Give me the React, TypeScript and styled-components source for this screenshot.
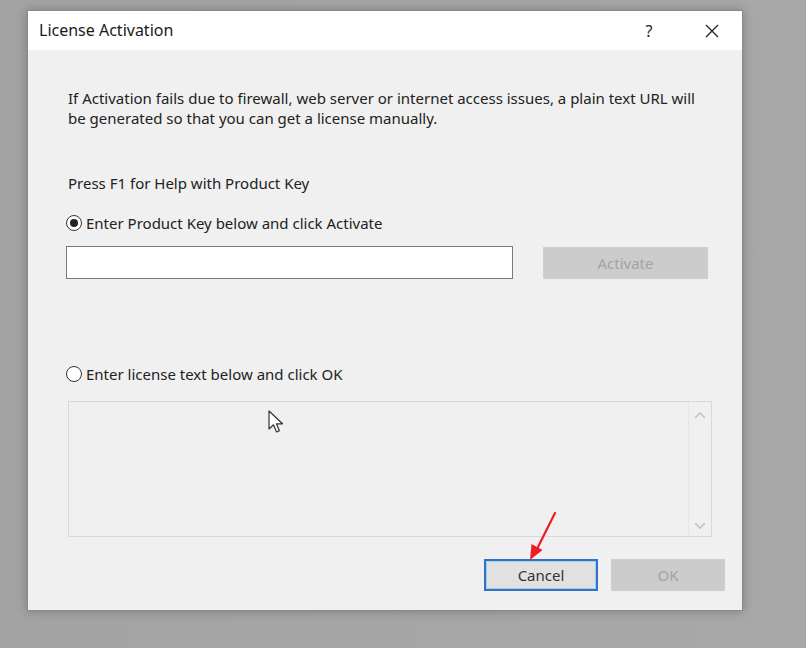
import React from "react";
import styled, {createGlobalStyle} from "styled-components";

const GlobalStyle = createGlobalStyle`
    html, body {
        margin: 0;
        padding: 0;
        background: #a6a6a6;
    }

    body {
        font-family: "Noto Sans", "Open Sans", sans-serif;
    }
`;

const Page = styled.div`
    width: 806px;
    height: 648px;
    padding: 10px 0 0 27px;
    box-sizing: border-box;
    background: linear-gradient(90deg, #a3a3a3, #a8a8a8);
`;

const Dialog = styled.div`
    position: relative;
    width: 716px;
    height: 601px;
    box-sizing: border-box;
    border: 1px solid #8a8a8a;
    background: #f0f0f0;
    box-shadow: 0 0 10px rgba(0, 0, 0, 0.25);
    display: flex;
    flex-direction: column;
`;

const TitleBar = styled.div`
    height: 39px;
    background: #fff;
    display: flex;
    align-items: center;
    padding-left: 11px;
    padding-right: 15px;
`;

const Title = styled.div`
    flex: 1;
    font-size: 16px;
    line-height: 20px;
    margin-top: -2px;
    color: #1a1a1a;
`;

const TitleButton = styled.div<{ wide?: boolean }>`
    width: ${({wide}) => (wide ? "30px" : "20px")};
    margin-left: ${({wide}) => (wide ? "38px" : "0")};
    display: flex;
    justify-content: center;
    align-items: center;
    font-size: 16px;
    color: #222;
`;

const Body = styled.div`
    flex: 1;
    display: flex;
    flex-direction: column;
    padding: 38px 17px 0 40px;
`;

const Text = styled.p<{ top?: number }>`
    margin: ${({top}) => top ?? 0}px 0 0;
    max-width: 630px;
    font-size: 15px;
    line-height: 20px;
    color: #222;
`;

const RadioRow = styled.label<{ top: number }>`
    margin: ${({top}) => top}px 0 0 -2px;
    display: flex;
    align-items: center;
    gap: 4px;
    font-size: 15px;
    line-height: 20px;
    color: #222;
`;

const RadioDot = styled.span<{ checked?: boolean }>`
    width: 14px;
    height: 14px;
    border-radius: 50%;
    border: 1px solid #333;
    background: #fff;
    display: flex;
    justify-content: center;
    align-items: center;

    &::after {
        content: "";
        width: 8px;
        height: 8px;
        border-radius: 50%;
        background: ${({checked}) => (checked ? "#222" : "transparent")};
    }
`;

const KeyRow = styled.div`
    margin-top: 13px;
    display: flex;
    align-items: center;
    margin-left: -2px;
`;

const KeyInput = styled.div`
    width: 445px;
    height: 31px;
    border: 1px solid #7a7a7a;
    background: #fff;
`;

const Button = styled.div<{ width: number; focused?: boolean; disabled?: boolean }>`
    width: ${({width}) => width}px;
    height: 32px;
    box-sizing: border-box;
    display: flex;
    justify-content: center;
    align-items: center;
    font-size: 15px;
    color: ${({disabled}) => (disabled ? "#a3a3a3" : "#333")};
    background: ${({disabled}) => (disabled ? "#cccccc" : "#e1e1e1")};
    border: ${({focused}) => (focused ? "2px solid #2f74c2" : "1px solid #cfcfcf")};
    box-shadow: ${({focused}) => (focused ? "inset 0 0 0 1px #a9cbee" : "none")};
`;

const ActivateButton = styled(Button)`
    margin-left: 30px;
`;

const LicenseBox = styled.div`
    margin-top: 17px;
    width: 644px;
    height: 136px;
    box-sizing: border-box;
    border: 1px solid #d9d9d9;
    display: flex;
    justify-content: flex-end;
`;

const ScrollBar = styled.div`
    width: 22px;
    border-left: 1px solid #e6e6e6;
    display: flex;
    flex-direction: column;
    justify-content: space-between;
    align-items: center;
    padding: 9px 0 6px;
`;

const ButtonRow = styled.div`
    margin-top: 22px;
    display: flex;
    justify-content: flex-end;
    gap: 13px;
`;

const Overlay = styled.svg`
    position: absolute;
    pointer-events: none;
`;

const Chevron: React.FC<{ up?: boolean }> = ({up}) => (
    <svg width="12" height="8" viewBox="0 0 12 8">
        <path d={up ? "M1 7 L6 2 L11 7" : "M1 1 L6 6 L11 1"} fill="none" stroke="#c3c3c3" strokeWidth="1.6"/>
    </svg>
);

export default function App() {
    return (
        <Page>
            <GlobalStyle/>
            <Dialog>
                <TitleBar>
                    <Title>License Activation</Title>
                    <TitleButton>?</TitleButton>
                    <TitleButton wide>
                        <svg width="14" height="14" viewBox="0 0 14 14">
                            <path d="M1 1 L13 13 M13 1 L1 13" stroke="#222" strokeWidth="1.3"/>
                        </svg>
                    </TitleButton>
                </TitleBar>
                <Body>
                    <Text>
                        If Activation fails due to firewall, web server or internet access issues, a plain text URL will
                        be generated so that you can get a license manually.
                    </Text>
                    <Text top={45}>Press F1 for Help with Product Key</Text>
                    <RadioRow top={20}>
                        <RadioDot checked/>
                        Enter Product Key below and click Activate
                    </RadioRow>
                    <KeyRow>
                        <KeyInput/>
                        <ActivateButton width={165} disabled>Activate</ActivateButton>
                    </KeyRow>
                    <RadioRow top={85}>
                        <RadioDot/>
                        Enter license text below and click OK
                    </RadioRow>
                    <LicenseBox>
                        <ScrollBar>
                            <Chevron up/>
                            <Chevron/>
                        </ScrollBar>
                    </LicenseBox>
                    <ButtonRow>
                        <Button width={114} focused>Cancel</Button>
                        <Button width={114} disabled>OK</Button>
                    </ButtonRow>
                </Body>

                {/* mouse pointer */}
                <Overlay width="20" height="26" viewBox="0 0 20 26" style={{left: 240, top: 399}}>
                    <path d="M1 1 L1 19 L5.5 14.8 L8.6 22 L11.4 20.8 L8.4 13.8 L14.5 13.8 Z"
                          fill="#fff" stroke="#333" strokeWidth="1.2" strokeLinejoin="round"/>
                </Overlay>

                {/* red annotation arrow */}
                <Overlay width="40" height="60" viewBox="0 0 40 60" style={{left: 498, top: 500}}>
                    <path d="M29 2 L11 38" stroke="#ee1c24" strokeWidth="2.2" strokeLinecap="round"/>
                    <path d="M4 49 L5.5 33 L16.5 39 Z" fill="#ee1c24"/>
                </Overlay>
            </Dialog>
        </Page>
    );
}
